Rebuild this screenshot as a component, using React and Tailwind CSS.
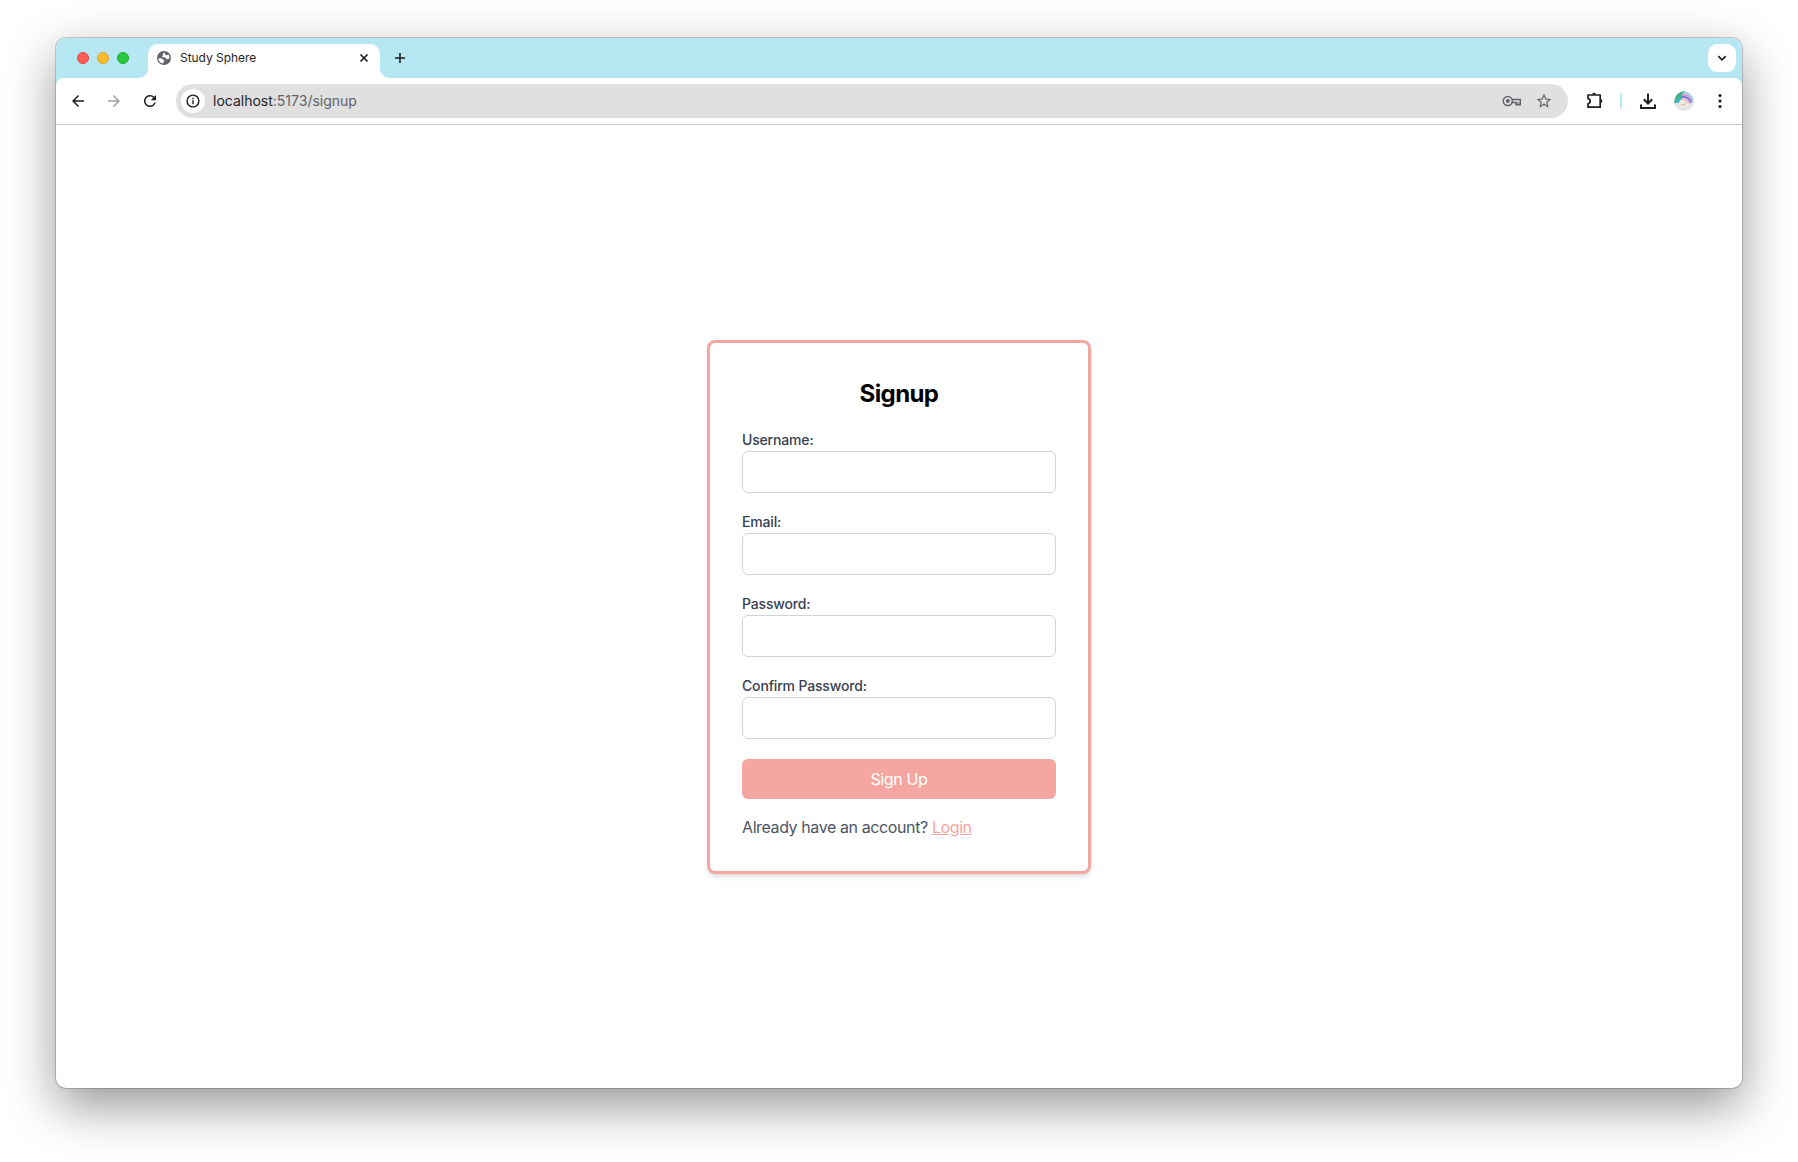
import React from "react";
import { MdArrowBack, MdArrowForward, MdRefresh, MdStarBorder } from "react-icons/md";

const fields = [
  { label: "Username:", type: "text", id: "username" },
  { label: "Email:", type: "email", id: "email" },
  { label: "Password:", type: "password", id: "password" },
  { label: "Confirm Password:", type: "password", id: "confirm" },
];

function Tab() {
  return (
    <div className="relative flex h-[34px] w-[232px] items-center rounded-t-[10px] bg-white pb-[6px] pl-2 pr-[10px]">
      <div className="absolute bottom-0 -left-[10px] size-[10px] bg-[radial-gradient(circle_at_0_0,transparent_9.5px,#fff_10.5px)]" />
      <div className="absolute bottom-0 -right-[10px] size-[10px] bg-[radial-gradient(circle_at_100%_0,transparent_9.5px,#fff_10.5px)]" />
      <svg viewBox="0 0 16 16" className="size-4">
        <circle cx="8" cy="8" r="7" fill="#5f6368" />
        <path
          d="M8.900 2.400C8 2.900 7 3.300 6.800 4.200c-.2.900.3 1-.3 1.600-.5.500-.6 1.200.3 1.400.9.200 1.800-.1 2.500.3.700.500.400 1.400 1.300 1.600 1 .200 1.400-.3 2.900-.4A5.700 5.700 0 0 0 12.300 4.300c-.6.800-1.300 1.200-2.200 1-.9-.3-1-1.900-1.200-2.900z M2.400 8.200c1.400-.1 2.700 0 3.700.5.800.4.900 1.100 1.700 1.400.800.300.9.900.3 1.500-.6.500-.9.900-.9 2A5.700 5.700 0 0 1 2.400 8.200z"
          fill="#fff"
        />
      </svg>
      <span className="ml-2 flex-1 text-[12px] leading-4 tracking-[-0.04px] text-[#1f1f1f]">Study Sphere</span>
      <svg viewBox="0 0 12 12" className="size-3" fill="none" stroke="#1f1f1f" strokeWidth="1.7">
        <path d="M2.500 2.500l7 7M9.500 2.500l-7 7" />
      </svg>
    </div>
  );
}

function TabStrip() {
  return (
    <div className="flex h-10 bg-[#b5e8f3] pr-[6px] pt-[6px]">
      <div className="flex h-7 w-[92px] items-center gap-2 pl-[21px]">
        <span className="size-3 rounded-full border border-[#e2463f] bg-[#ff5f57]" />
        <span className="size-3 rounded-full border border-[#e1a325] bg-[#febc2e]" />
        <span className="size-3 rounded-full border border-[#1dad2b] bg-[#28c840]" />
      </div>
      <Tab />
      <svg viewBox="0 0 12 12" className="ml-[14px] mt-2 size-3" fill="none" stroke="#1f1f1f" strokeWidth="1.600">
        <path d="M6 .900v10.200M.900 6h10.200" />
      </svg>
      <div className="ml-auto flex size-7 items-center justify-center rounded-[9px] bg-white">
        <svg viewBox="0 0 12 12" className="size-3" fill="none" stroke="#1f1f1f" strokeWidth="1.800">
          <path d="M2.300 4.200L6 7.800l3.700-3.600" />
        </svg>
      </div>
    </div>
  );
}

function AddressBar() {
  return (
    <div className="ml-[17px] flex h-[34px] flex-1 items-center rounded-full bg-[#e0e0e0] pl-[5px] pr-[15px]">
      <div className="flex size-6 items-center justify-center rounded-full bg-white">
        <svg viewBox="0 0 14 14" className="size-[14px]" fill="none" stroke="#1f1f1f" strokeWidth="1.400">
          <circle cx="7" cy="7" r="5.900" />
          <path d="M7 6.200v4.100M7 3.700v1.500" />
        </svg>
      </div>
      <span className="ml-2 text-[14px] leading-5 text-[#5f6368]">
        <span className="text-[#1f1f1f]">localhost</span>:5173/signup
      </span>
      <svg viewBox="0 0 20 12" className="ml-auto h-3 w-5" fill="none" stroke="#5f6368" strokeWidth="1.500">
        <circle cx="5.800" cy="6" r="4.500" />
        <circle cx="5.800" cy="6" r="1.900" fill="#5f6368" stroke="none" />
        <path d="M9.800 4.500h8.500v5.200h-4.200V7.400H9.900" />
        <path d="M14.800 7h2.800v2.400h-2.800z" fill="#5f6368" fillOpacity=".5" stroke="none" />
      </svg>
      <MdStarBorder className="ml-[13px] size-[18px] text-[#5f6368]" />
    </div>
  );
}

function Avatar() {
  return (
    <svg viewBox="0 0 20 20" className="size-5">
      <defs>
        <clipPath id="avatar-clip">
          <circle cx="10" cy="10" r="10" />
        </clipPath>
      </defs>
      <g clipPath="url(#avatar-clip)">
        <rect width="20" height="20" fill="#e3e4e6" />
        <path d="M0 12C1 4 5 0 11 0L9 6l-5 6z" fill="#3fb58c" />
        <path d="M2 12l2-4 4-1-1 5z" fill="#45b8d8" />
        <g fill="none" strokeWidth="2.200">
          <path d="M9 1.500c5 0 8 3 10 8" stroke="#9bd3ee" />
          <path d="M8 3.800c5-.5 8 2.200 10 6.800" stroke="#e39ad2" />
          <path d="M8 6c4-.5 7 1.500 9 6" stroke="#6f7fd8" />
          <path d="M8 8.200c3-.5 6 1 7.500 4" stroke="#f0b9c4" />
        </g>
        <path d="M4.500 12.500l2.500-4 3 1 3.500 2.500 3.500 3-3-.300-3 .800-5-.500z" fill="#f4ede6" />
        <path d="M7 14l3-1 2 2M11 10.500l2 2" stroke="#c9a58c" strokeWidth=".8" fill="none" />
      </g>
    </svg>
  );
}

function Toolbar() {
  return (
    <div className="bg-[#b5e8f3]">
      <div className="flex h-[47px] items-center rounded-t-[8px] border-b border-[#c9c9c9] bg-white pl-[13px] pr-[14px]">
        <MdArrowBack className="size-[18px] text-[#1f1f1f]" />
        <MdArrowForward className="ml-[18px] size-[18px] text-[#a0a0a0]" />
        <MdRefresh className="ml-[18px] size-[18px] text-[#1f1f1f]" />
        <AddressBar />
        <svg viewBox="0 0 18 18" className="ml-[18px] size-[18px]">
          <path
            d="M2 3h12.200v12.200H2v-3.400c2.900-.500 2.900-4.700 0-5.200z"
            fill="none"
            stroke="#1f1f1f"
            strokeWidth="1.700"
            strokeLinejoin="round"
          />
          <path d="M6.100 2.800a2 2 0 0 1 4 0zM14.400 7.100a2 2 0 0 1 0 4z" fill="#1f1f1f" />
        </svg>
        <span className="ml-[16px] h-4 w-[2px] rounded-full bg-[#b5e8f3]" />
        <svg viewBox="0 0 18 18" className="ml-[17px] size-[18px]" fill="none" stroke="#1f1f1f" strokeWidth="2">
          <path d="M9 1.500v9.500M4.800 7.300L9 11.500l4.200-4.200M2 12.500v3.500h14v-3.500" />
        </svg>
        <div className="ml-[17px]">
          <Avatar />
        </div>
        <svg viewBox="0 0 16 16" className="ml-[18px] size-4" fill="#1f1f1f">
          <circle cx="8" cy="2.500" r="1.600" />
          <circle cx="8" cy="8" r="1.600" />
          <circle cx="8" cy="13.500" r="1.600" />
        </svg>
      </div>
    </div>
  );
}

function SignupCard() {
  return (
    <div className="w-96 rounded-lg border-[3px] border-[#f6a6a0] bg-white p-8 shadow-md">
      <h2 className="mb-5 pt-[3px] text-center text-2xl font-bold tracking-[-0.6px] text-black">Signup</h2>
      <form className="flex flex-col gap-5" onSubmit={(e) => e.preventDefault()}>
        {fields.map((f) => (
          <div key={f.id} className="flex flex-col">
            <label htmlFor={f.id} className="pb-px text-sm font-medium tracking-[-0.17px] text-[#374151]">
              {f.label}
            </label>
            <input
              id={f.id}
              type={f.type}
              className="-mb-px h-[42px] w-full rounded-md border border-[#d1d5db] px-3"
            />
          </div>
        ))}
        <button
          type="submit"
          className="mt-px h-10 rounded-md bg-[#f6a6a0] text-base tracking-[-0.35px] text-white"
        >
          Sign Up
        </button>
      </form>
      <p className="mt-4 text-base tracking-[-0.4px] text-[#4b5563]">
        Already have an account?{" "}
        <a href="#login" className="text-[#f6a6a0] underline">
          Login
        </a>
      </p>
    </div>
  );
}

export default function App() {
  return (
    <div className="h-[1162px] w-[1798px] overflow-hidden bg-white px-14 pt-[38px] font-['Inter',sans-serif]">
      <div className="flex h-[1050px] flex-col overflow-hidden rounded-[10px] bg-white shadow-[0_0_0_1px_rgba(0,0,0,0.18),0_18px_50px_rgba(0,0,0,0.42)]">
        <TabStrip />
        <Toolbar />
        <main className="flex flex-1 items-center justify-center">
          <SignupCard />
        </main>
      </div>
    </div>
  );
}
